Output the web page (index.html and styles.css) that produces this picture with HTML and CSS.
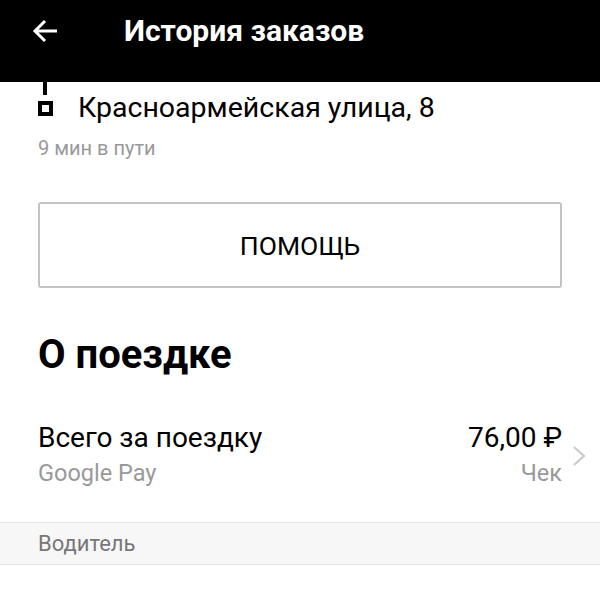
FILE: index.html
```html
<!DOCTYPE html>
<html lang="ru">
<head>
  <meta charset="UTF-8">
  <meta name="viewport" content="width=device-width, initial-scale=1.0">
  <title>История заказов</title>
  <link rel="stylesheet" href="styles.css">
</head>
<body>
  <div class="topbar">
    <svg class="back" width="26" height="24" viewBox="0 0 26 24">
      <path d="M25 12H3M13 2L3 12l10 10" fill="none" stroke="#fff" stroke-width="3"/>
    </svg>
    <h1 class="title">История заказов</h1>
  </div>

  <div class="route">
    <div class="point">
      <span class="mark"></span>
      <span class="addr">Красноармейская улица, 8</span>
    </div>
    <div class="time">9 мин в пути</div>
  </div>

  <div class="help">ПОМОЩЬ</div>

  <h2 class="section">О поездке</h2>

  <div class="total">
    <div class="total-left">
      <div class="label">Всего за поездку</div>
      <div class="sub">Google Pay</div>
    </div>
    <div class="total-right">
      <div class="price">76,00 ₽</div>
      <div class="sub">Чек</div>
    </div>
    <svg class="chevron" width="14" height="22" viewBox="0 0 14 22">
      <path d="M2 2l10 9-10 9" fill="none" stroke="#c8c8c8" stroke-width="2"/>
    </svg>
  </div>

  <div class="group">Водитель</div>
</body>
</html>
```

FILE: styles.css
```css
* {
  margin: 0;
  padding: 0;
  box-sizing: border-box;
}
body {
  font-family: Roboto, "Noto Sans", sans-serif;
  background: #fff;
  color: #000;
  width: 600px;
}
.topbar {
  height: 82px;
  background: #000;
  display: flex;
  align-items: flex-start;
  padding: 19px 0 0 32px;
}
.title {
  color: #fff;
  font-size: 30px;
  font-weight: 700;
  margin-left: 66px;
  line-height: 24px;
}
.route {
  padding: 0 38px;
}
.point {
  display: flex;
  align-items: center;
  height: 50px;
}
.mark {
  width: 15px;
  height: 15px;
  border: 4px solid #000;
  margin-top: 3px;
  position: relative;
  flex-shrink: 0;
}
/* линия от предыдущей точки маршрута */
.mark::before {
  content: "";
  position: absolute;
  left: 1px;
  top: -23px;
  width: 4px;
  height: 13px;
  background: #000;
}
.addr {
  font-size: 28.5px;
  margin-left: 25px;
}
.time {
  color: #999;
  font-size: 20px;
  line-height: 24px;
  margin-top: 4px;
}
.help {
  margin: 42px 38px 0;
  height: 86px;
  border: 2px solid #c4c4c4;
  border-radius: 3px;
  display: flex;
  align-items: center;
  justify-content: center;
  font-size: 26.5px;
}
.section {
  font-size: 40px;
  font-weight: 700;
  padding: 45px 38px 0;
  line-height: 44px;
}
.total {
  display: flex;
  align-items: center;
  padding: 44px 14px 31px 38px;
}
.total-left {
  flex: 1;
}
.total-right {
  text-align: right;
}
.label,
.price {
  font-size: 28px;
  line-height: 34px;
}
.sub {
  color: #999;
  font-size: 23.5px;
  line-height: 36px;
}
.chevron {
  margin-left: 10px;
}
.group {
  background: #f7f7f7;
  border-top: 1px solid #e6e6e6;
  border-bottom: 1px solid #e6e6e6;
  height: 43px;
  display: flex;
  align-items: center;
  padding-left: 38px;
  color: #777;
  font-size: 22px;
}
```
